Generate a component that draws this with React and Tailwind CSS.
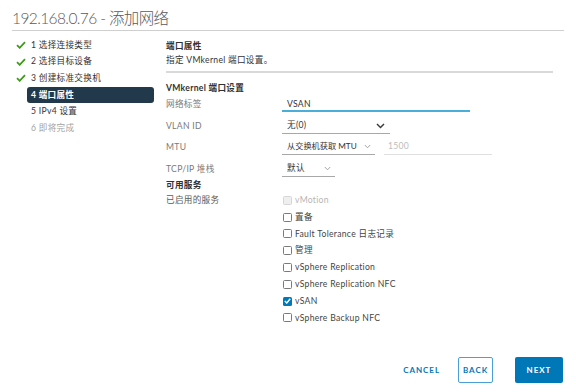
import React from "react";

const Check = () => (
  <svg width="10" height="8" viewBox="0 0 10 8" className="shrink-0">
    <polyline points="1,4.2 3.7,6.8 9,1.2" fill="none" stroke="#3f9a1a" strokeWidth="1.8" />
  </svg>
);

const Chevron = ({ big }) =>
  big ? (
    <svg width="9" height="6" viewBox="0 0 9 6">
      <polyline points="1,1 4.5,4.6 8,1" fill="none" stroke="#3a3a3a" strokeWidth="1.4" />
    </svg>
  ) : (
    <svg width="7" height="5" viewBox="0 0 7 5">
      <polyline points="0.8,1 3.5,3.8 6.2,1" fill="none" stroke="#9a9a9a" strokeWidth="0.9" />
    </svg>
  );

const Box = ({ state }) => {
  if (state === "checked")
    return (
      <span className="w-[9px] h-[9px] rounded-[1.5px] bg-[#0079b8] flex items-center justify-center shrink-0">
        <svg width="7" height="6" viewBox="0 0 7 6">
          <polyline points="0.8,3 2.8,5 6.2,0.8" fill="none" stroke="#ffffff" strokeWidth="1.4" />
        </svg>
      </span>
    );
  if (state === "disabled")
    return <span className="w-[9px] h-[9px] rounded-[1.5px] border border-[#d6d6d6] bg-[#efefef] shrink-0" />;
  return <span className="w-[9px] h-[9px] rounded-[1.5px] border border-[#7a7a7a] bg-white shrink-0" />;
};

const steps = [
  { n: "1 选择连接类型", done: true },
  { n: "2 选择目标设备", done: true },
  { n: "3 创建标准交换机", done: true },
  { n: "4 端口属性", active: true },
  { n: "5 IPv4 设置" },
  { n: "6 即将完成", disabled: true },
];

const services = [
  { label: "vMotion", state: "disabled" },
  { label: "置备" },
  { label: "Fault Tolerance 日志记录" },
  { label: "管理" },
  { label: "vSphere Replication" },
  { label: "vSphere Replication NFC" },
  { label: "vSAN", state: "checked" },
  { label: "vSphere Backup NFC" },
];

export default function App() {
  return (
    <div className="w-[576px] h-[392px] bg-white flex flex-col overflow-hidden font-['Lato','Noto_Sans_CJK_SC',sans-serif] text-[8.6px] tracking-[0.3px] text-[#333333]">
      {/* Title */}
      <div className="mx-3 h-[31px] border-b border-[#cfcfcf] pt-[8px]">
        <div className="leading-[20px] text-[15.5px] font-light text-[#5a5a5a] tracking-[-0.6px]">
          192.168.0.76 - 添加网络
        </div>
      </div>

      {/* Body */}
      <div className="flex flex-1">
        {/* Nav */}
        <div className="w-[154px] pl-[16px] pt-[6px] flex flex-col">
          {steps.map((s) => (
            <div key={s.n} className="h-[16.6px] flex items-center">
              <div className="w-[11px] flex items-center">{s.done && <Check />}</div>
              <div
                className={
                  s.active
                    ? "flex-1 h-[16px] flex items-center pl-[4px] rounded-[3px] bg-[#21394a] text-white font-bold"
                    : s.disabled
                    ? "flex-1 h-[16px] flex items-center pl-[4px] text-[#a3a3a3]"
                    : "flex-1 h-[16px] flex items-center pl-[4px] text-[#333333]"
                }
              >
                {s.n}
              </div>
            </div>
          ))}
        </div>

        {/* Content */}
        <div className="flex-1 pl-[12px] pr-[23px] pt-[8px] flex flex-col">
          <div className="h-[14px] flex items-center font-bold text-[#313131]">端口属性</div>
          <div className="h-[14px] flex items-center">指定 VMkernel 端口设置。</div>
          <div className="mt-[4px] h-[2px] bg-[#d9d9d9]" />
          <div className="mt-[8px] h-[14px] flex items-center font-bold text-[#313131]">VMkernel 端口设置</div>

          {/* 网络标签 */}
          <div className="h-[17px] flex">
            <div className="w-[116px] pt-[2px] flex items-center text-[#7a7a7a]">网络标签</div>
            <div className="w-[188px] border-b-2 border-[#49afd9] pt-[3px] pl-[5px] flex items-center text-[#333333]">
              VSAN
            </div>
          </div>

          {/* VLAN ID */}
          <div className="h-[22px] flex items-end">
            <div className="w-[116px] h-[16px] flex items-center text-[#7a7a7a]">VLAN ID</div>
            <div className="w-[108px] h-[16px] border-b border-[#a8a8a8] pl-[5px] pr-[5px] flex items-center justify-between">
              <span>无(0)</span>
              <Chevron big />
            </div>
          </div>

          {/* MTU */}
          <div className="h-[21px] flex items-end">
            <div className="w-[116px] h-[16px] flex items-center text-[#7a7a7a]">MTU</div>
            <div className="w-[93px] h-[16px] border-b border-[#a8a8a8] pl-[5px] pr-[4px] flex items-center justify-between">
              <span className="whitespace-nowrap text-[8.2px] tracking-[0px]">从交换机获取 MTU</span>
              <Chevron />
            </div>
            <div className="ml-[9px] w-[108px] h-[16px] border-b border-[#e0e0e0] pl-[4px] flex items-center text-[#bdbdbd]">
              1500
            </div>
          </div>

          {/* TCP/IP */}
          <div className="h-[22px] flex items-end">
            <div className="w-[116px] h-[16px] flex items-center text-[#7a7a7a]">TCP/IP 堆栈</div>
            <div className="w-[53px] h-[16px] border-b border-[#a8a8a8] pl-[5px] pr-[4px] flex items-center justify-between">
              <span>默认</span>
              <Chevron />
            </div>
          </div>

          <div className="mt-[1px] h-[14px] flex items-center font-bold text-[#313131]">可用服务</div>

          <div className="flex">
            <div className="w-[116px] h-[16.8px] flex items-center text-[#5a5a5a]">已启用的服务</div>
            <div className="flex flex-col">
              {services.map((s) => (
                <div key={s.label} className="h-[16.8px] flex items-center gap-[3px] pl-[1px]">
                  <Box state={s.state} />
                  <span className={s.state === "disabled" ? "text-[#b5b5b5]" : "text-[#444444]"}>{s.label}</span>
                </div>
              ))}
            </div>
          </div>
        </div>
      </div>

      {/* Footer */}
      <div className="h-[26px] mb-[9px] flex items-center justify-end pr-[13px] text-[8px] font-bold tracking-[0.12em]">
        <span className="mr-[18px] text-[#0079b8]">CANCEL</span>
        <div className="w-[35px] h-[26px] border border-[#4aa0d5] rounded-[2px] flex items-center justify-center text-[#0079b8]">
          BACK
        </div>
        <div className="ml-[22px] w-[48px] h-[26px] bg-[#0077b6] rounded-[2px] flex items-center justify-center text-white">
          NEXT
        </div>
      </div>
    </div>
  );
}
